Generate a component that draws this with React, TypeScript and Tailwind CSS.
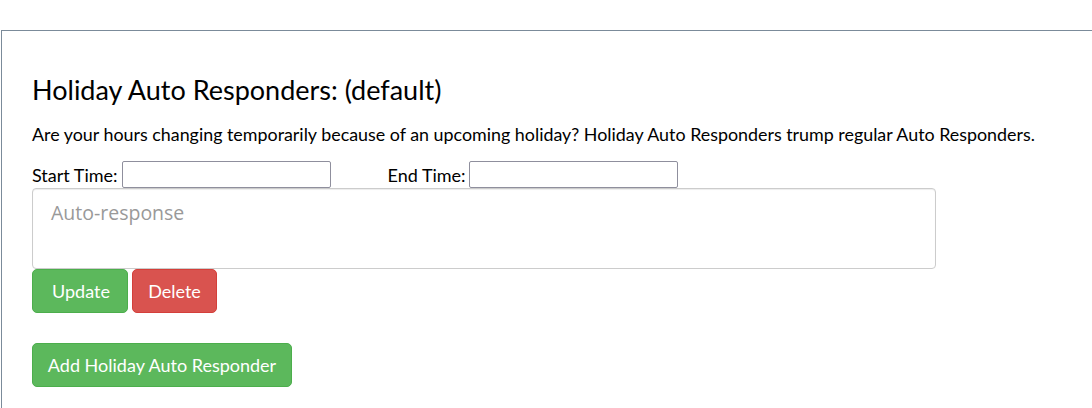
export default function App() {
  const lato = { fontFamily: 'Lato, "Liberation Sans", sans-serif' };

  return (
    <div className="min-h-screen bg-white pt-[30px] text-black" style={lato}>
      <div className="ml-[1px] min-h-[378px] border-l border-t border-[#7b8b9a] pl-[30px] pb-[20px]">
        <h3 className="mt-[44px] text-[27px] leading-[30px]">Holiday Auto Responders: (default)</h3>
        <p className="mt-[17px] text-[17.88px] leading-[24px]">
          Are your hours changing temporarily because of an upcoming holiday? Holiday Auto Responders trump regular Auto Responders.
        </p>

        <div className="mt-[15px] flex h-[27px] items-center text-[18px] leading-[24px]">
          <label className="flex items-center">
            Start Time:
            <input type="text" className="ml-[4px] h-[27px] w-[209px] rounded-[2px] border border-[#8f8f9d] bg-white" />
          </label>
          <label className="ml-[57px] flex items-center">
            End Time:
            <input type="text" className="ml-[3px] h-[27px] w-[209px] rounded-[2px] border border-[#8f8f9d] bg-white" />
          </label>
        </div>

        <textarea
          placeholder="Auto-response"
          className="block h-[81px] w-[904px] resize-none rounded-[4px] border border-[#cccccc] pl-[18px] pt-[10px] text-[19.5px] leading-[28px] text-[#555] shadow-[inset_0_1px_1px_rgba(0,0,0,0.075)] outline-none placeholder:text-[#999]"
          style={{ fontFamily: '"Open Sans", "Noto Sans", sans-serif' }}
        />

        <div className="flex gap-[4px]">
          <button className="h-[44px] w-[96px] rounded-[5px] border border-[#4cae4c] bg-[#5cb85c] pl-[2px] text-[18px] text-white">
            Update
          </button>
          <button className="h-[44px] w-[85px] rounded-[5px] border border-[#d43f3a] bg-[#d9534f] text-[18px] text-white">
            Delete
          </button>
        </div>

        <button className="mt-[30px] h-[44px] w-[260px] rounded-[5px] border border-[#4cae4c] bg-[#5cb85c] text-[18px] text-white">
          Add Holiday Auto Responder
        </button>
      </div>
    </div>
  );
}
